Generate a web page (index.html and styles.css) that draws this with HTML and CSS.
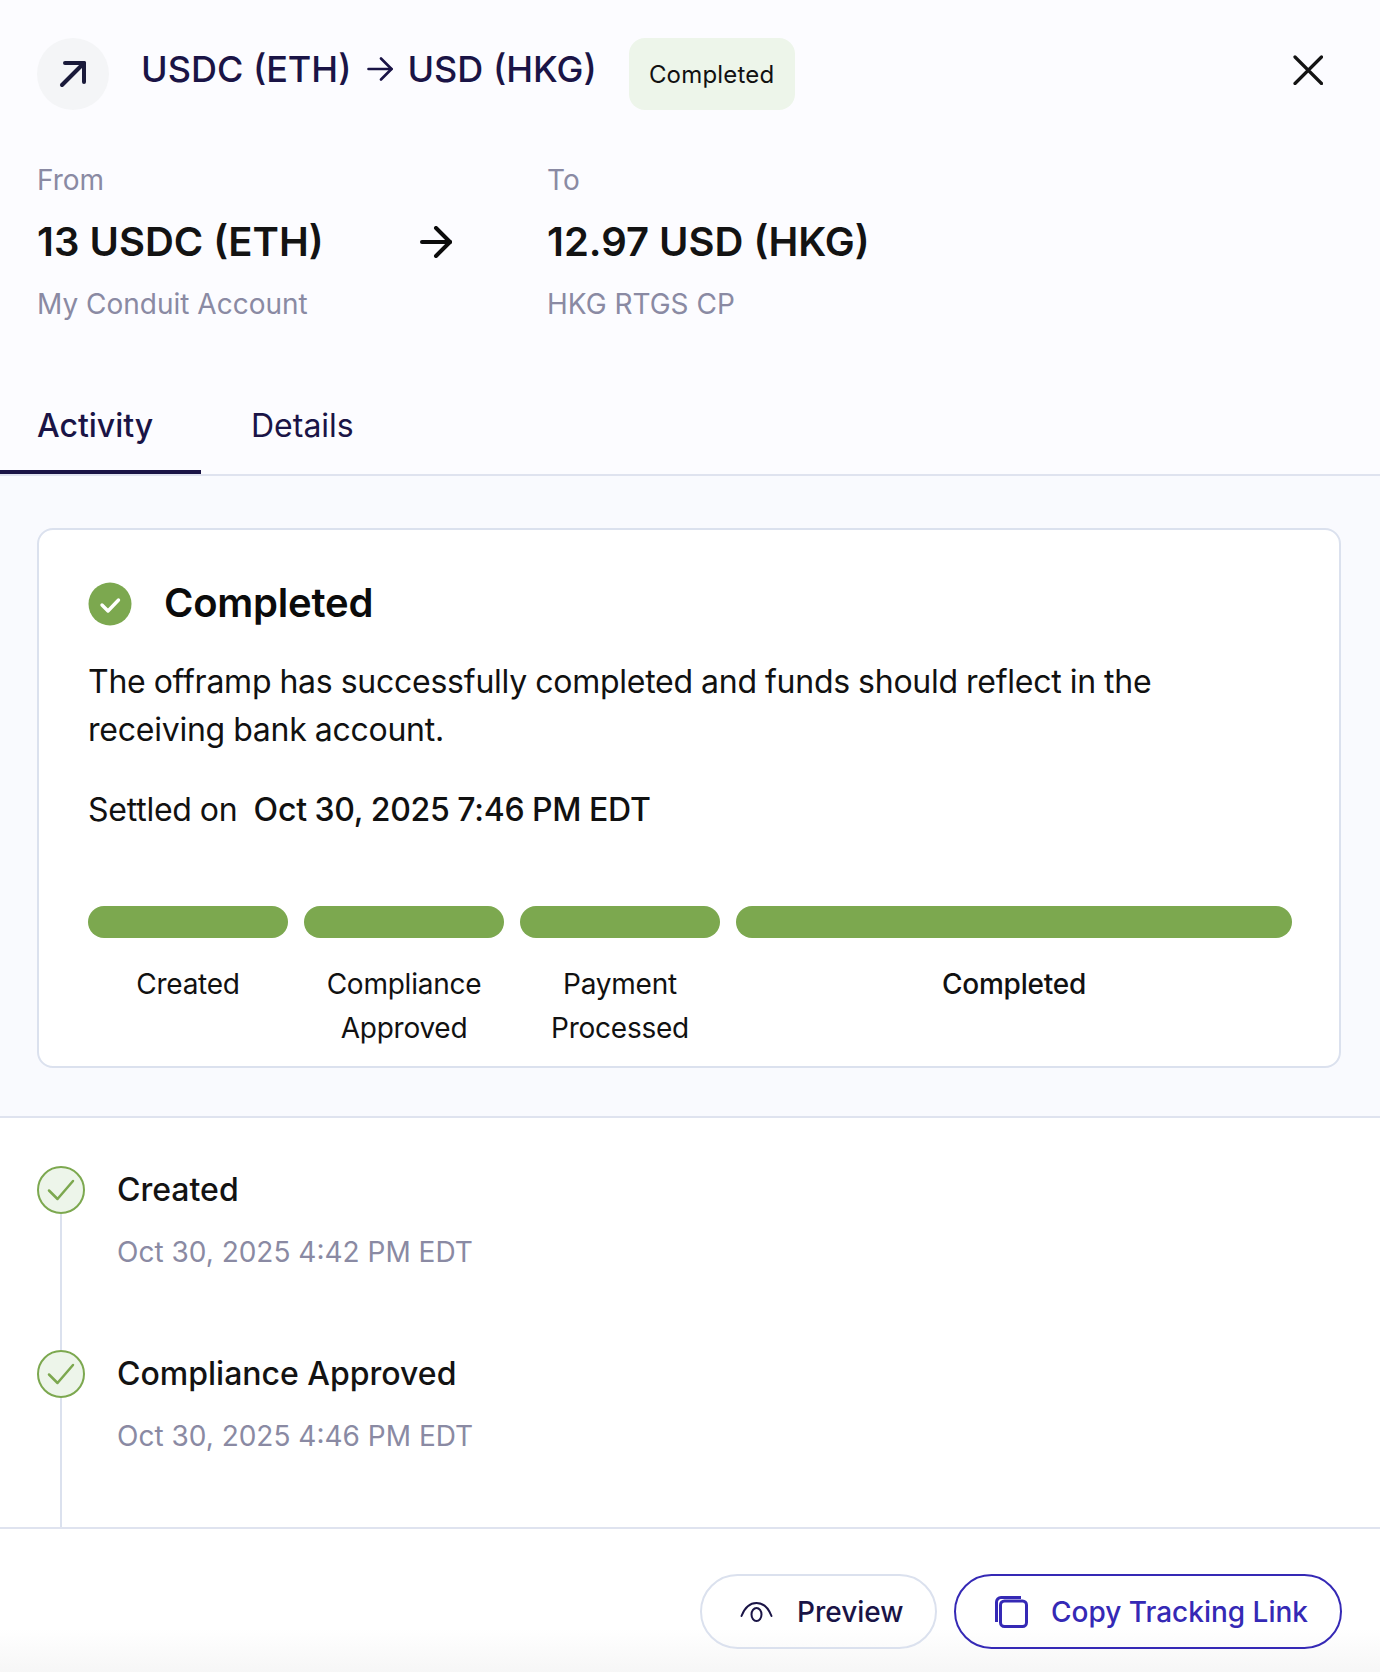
FILE: index.html
```html
<!DOCTYPE html>
<html lang="en">
<head>
<meta charset="utf-8">
<title>USDC (ETH) to USD (HKG)</title>
<link rel="stylesheet" href="styles.css">
</head>
<body>
<div class="panel">
  <div class="top">
    <header class="head">
      <div class="head-left">
        <span class="round-icon">
          <svg width="28" height="28" viewBox="0 0 28 28" fill="none" stroke="#1a1a3a" stroke-width="4" stroke-linecap="round" stroke-linejoin="round"><path d="M3 25 25 3"/><path d="M6 3h19v19"/></svg>
        </span>
        <h1 class="title">USDC (ETH)<svg class="title-arrow" width="26" height="24" viewBox="0 0 26 24" fill="none" stroke="#1a1446" stroke-width="2.6" stroke-linecap="round" stroke-linejoin="round"><path d="M1.5 12h23"/><path d="M14 1.5 24.5 12 14 22.500"/></svg>USD (HKG)</h1>
        <span class="badge">Completed</span>
      </div>
      <svg class="close" width="30" height="30" viewBox="0 0 30 30" fill="none" stroke="#141414" stroke-width="3.2" stroke-linecap="round"><path d="M2 2l26.500 26.500M28.500 2 2 28.500"/></svg>
    </header>
    <div class="transfer">
      <div class="side side-from">
        <div class="muted">From</div>
        <div class="amount">13 USDC (ETH)</div>
        <div class="muted">My Conduit Account</div>
      </div>
      <svg class="transfer-arrow" width="32" height="32" viewBox="0 0 32 32" fill="none" stroke="#0b0b0b" stroke-width="4" stroke-linecap="round" stroke-linejoin="round"><path d="M2 16h28"/><path d="M16 2l14 14-14 14"/></svg>
      <div class="side">
        <div class="muted">To</div>
        <div class="amount">12.97 USD (HKG)</div>
        <div class="muted">HKG RTGS CP</div>
      </div>
    </div>
    <nav class="tabs">
      <span class="tab tab-active">Activity</span>
      <span class="tab">Details</span>
    </nav>
  </div>

  <section class="status">
    <div class="card">
      <div class="card-head">
        <svg width="44" height="44" viewBox="0 0 44 44"><circle cx="22" cy="22" r="21.500" fill="#7ca84f"/><path d="M14 23l6 6 10.500-11" fill="none" stroke="#fff" stroke-width="3.400" stroke-linecap="round" stroke-linejoin="round"/></svg>
        <h2 class="card-title">Completed</h2>
      </div>
      <p class="card-text">The offramp has successfully completed and funds should reflect in the receiving bank account.</p>
      <p class="settled">Settled on <strong class="settled-date">Oct 30, 2025 7:46 PM EDT</strong></p>
      <div class="steps">
        <div class="step"><div class="bar"></div><div class="step-label">Created</div></div>
        <div class="step"><div class="bar"></div><div class="step-label">Compliance Approved</div></div>
        <div class="step"><div class="bar"></div><div class="step-label">Payment Processed</div></div>
        <div class="step"><div class="bar"></div><div class="step-label step-current">Completed</div></div>
      </div>
    </div>
  </section>

  <section class="timeline">
    <div class="event">
      <div class="rail">
        <svg width="48" height="48" viewBox="0 0 48 48"><circle cx="24" cy="24" r="23" fill="#edf5ea" stroke="#7ca84f" stroke-width="2"/><path d="M12 24.500l8.500 8.500L36 15" fill="none" stroke="#7ca84f" stroke-width="2.500" stroke-linecap="round" stroke-linejoin="round"/></svg>
      </div>
      <div>
        <div class="event-title">Created</div>
        <div class="event-date">Oct 30, 2025 4:42 PM EDT</div>
      </div>
    </div>
    <div class="event">
      <div class="rail">
        <svg width="48" height="48" viewBox="0 0 48 48"><circle cx="24" cy="24" r="23" fill="#edf5ea" stroke="#7ca84f" stroke-width="2"/><path d="M12 24.500l8.500 8.500L36 15" fill="none" stroke="#7ca84f" stroke-width="2.500" stroke-linecap="round" stroke-linejoin="round"/></svg>
      </div>
      <div>
        <div class="event-title">Compliance Approved</div>
        <div class="event-date">Oct 30, 2025 4:46 PM EDT</div>
      </div>
    </div>
  </section>

  <footer class="foot">
    <button class="btn btn-plain" type="button">
      <svg width="33" height="22" viewBox="0 0 33 22" fill="none" stroke="#1a1446" stroke-width="2"><path d="M1.500 15C5 6 11 2 16.500 2S28 6 31.500 15" stroke-linecap="round"/><ellipse cx="16.500" cy="13.500" rx="5" ry="6.500"/></svg>
      Preview
    </button>
    <button class="btn btn-primary" type="button">
      <svg width="33" height="32" viewBox="0 0 33 32" fill="none" stroke="#3529b5" stroke-width="3"><rect x="5.500" y="5" width="26" height="25.500" rx="4"/><path d="M1.500 26V6a4.500 4.500 0 0 1 4.500-4.500h20"/></svg>
      Copy Tracking Link
    </button>
  </footer>
</div>
</body>
</html>
```
FILE: styles.css
```css
* { box-sizing: border-box; }
html, body { margin: 0; padding: 0; }
body { font-family: Inter, "Liberation Sans", sans-serif; color: #111; }

.panel {
  width: 1380px;
  height: 1672px;
  display: flex;
  flex-direction: column;
  overflow: hidden;
  background: #fff;
}

.top { background: #fcfcff; height: 476px; padding-top: 38px; border-bottom: 2px solid #dfe3ef; }

.head { display: flex; justify-content: space-between; align-items: flex-start; padding: 0 56px 0 37px; }
.head-left { display: flex; align-items: flex-start; }
.round-icon {
  width: 72px; height: 72px; border-radius: 50%;
  background: #f4f5f7;
  display: flex; align-items: center; justify-content: center;
  margin-right: 32px;
}
.title {
  margin: 0; height: 62px;
  display: flex; align-items: center;
  font-size: 36px; font-weight: 500; color: #1a1446;
}
.title-arrow { margin: 0 14px 0 16px; }
.badge {
  margin-left: 32px;
  width: 166px; height: 72px;
  border-radius: 16px;
  background: #edf5ea;
  display: flex; align-items: center; justify-content: center;
  font-size: 24px; letter-spacing: 0.2px; color: #111;
}
.close { margin-top: 17px; margin-right: 1px; }

.transfer { display: flex; align-items: center; padding: 0 37px; margin-top: 48px; }
.side-from { width: 383px; }
.transfer-arrow { margin-right: 95px; }
.muted { font-size: 28px; line-height: 44px; color: #8a8aa3; }
.amount { font-size: 40px; font-weight: 600; line-height: 48px; margin: 16px 0; color: #131313; }

.tabs { display: flex; margin-top: 76px; }
.tab { display: block; height: 72px; font-size: 32px; line-height: 48px; color: #1a1446; padding: 0 50px 0 37px; }
.tab-active { width: 201px; font-weight: 500; border-bottom: 4px solid #1a1446; }
.tab:not(.tab-active) { padding-left: 50px; }

.status { background: #f9fafe; height: 642px; padding: 52px 37px 0; border-bottom: 2px solid #dfe3ef; }
.card {
  width: 1304px; height: 540px;
  background: #fff;
  border: 2px solid #dbe1ee;
  border-radius: 16px;
  padding: 50px 49px 0;
  letter-spacing: -0.015em;
}
.card-head { display: flex; align-items: center; gap: 32px; height: 48px; }
.card-title { margin: 0 0 4px; font-size: 40px; font-weight: 600; color: #0b0b0b; }
.card-text { margin: 30px 0 0; max-width: 1120px; font-size: 32px; line-height: 48px; color: #111; word-spacing: -0.6px; }
.settled { margin: 32px 0 0; font-size: 32px; line-height: 48px; color: #111; word-spacing: -0.6px; }
.settled-date { font-weight: 500; margin-left: 8px; }

.steps { display: grid; grid-template-columns: 200px 200px 200px 556px; gap: 16px; margin-top: 72px; }
.bar { height: 32px; border-radius: 16px; background: #7ca84f; }
.step-label { margin: 24px auto 0; max-width: 180px; text-align: center; font-size: 28px; line-height: 44px; color: #111; }
.step-current { font-weight: 500; max-width: none; }

.timeline { flex: 1; padding: 48px 37px 0; overflow: hidden; }
.event { display: flex; gap: 32px; height: 184px; }
.rail { width: 48px; height: 184px; display: flex; flex-direction: column; align-items: center; flex: none; }
.rail::after { content: ""; display: block; width: 2px; flex: 1; background: #dbe1ee; }
.rail svg { flex: none; }
.event-title { font-size: 32px; line-height: 48px; font-weight: 500; color: #131313; }
.event-date { font-size: 28px; line-height: 44px; margin-top: 16px; color: #8a8aa3; }

.foot {
  height: 145px; flex: none;
  border-top: 2px solid #dfe3ef;
  background: linear-gradient(#fff 0, #fff 100px, #f6f6f6 145px);
  display: flex; justify-content: flex-end; align-items: flex-start;
  gap: 17px;
  padding: 45px 38px 0 0;
}
.btn {
  height: 75px; border-radius: 38px;
  background: transparent;
  display: flex; align-items: center; justify-content: flex-start;
  font-family: inherit; font-size: 28px; font-weight: 500;
}
.btn-plain { width: 237px; padding: 0 0 0 38px; gap: 24px; border: 2px solid #dbe1ee; color: #1a1446; }
.btn-primary { width: 388px; padding: 0 0 0 39px; gap: 23px; border: 2px solid #3529b5; color: #3529b5; }
```
